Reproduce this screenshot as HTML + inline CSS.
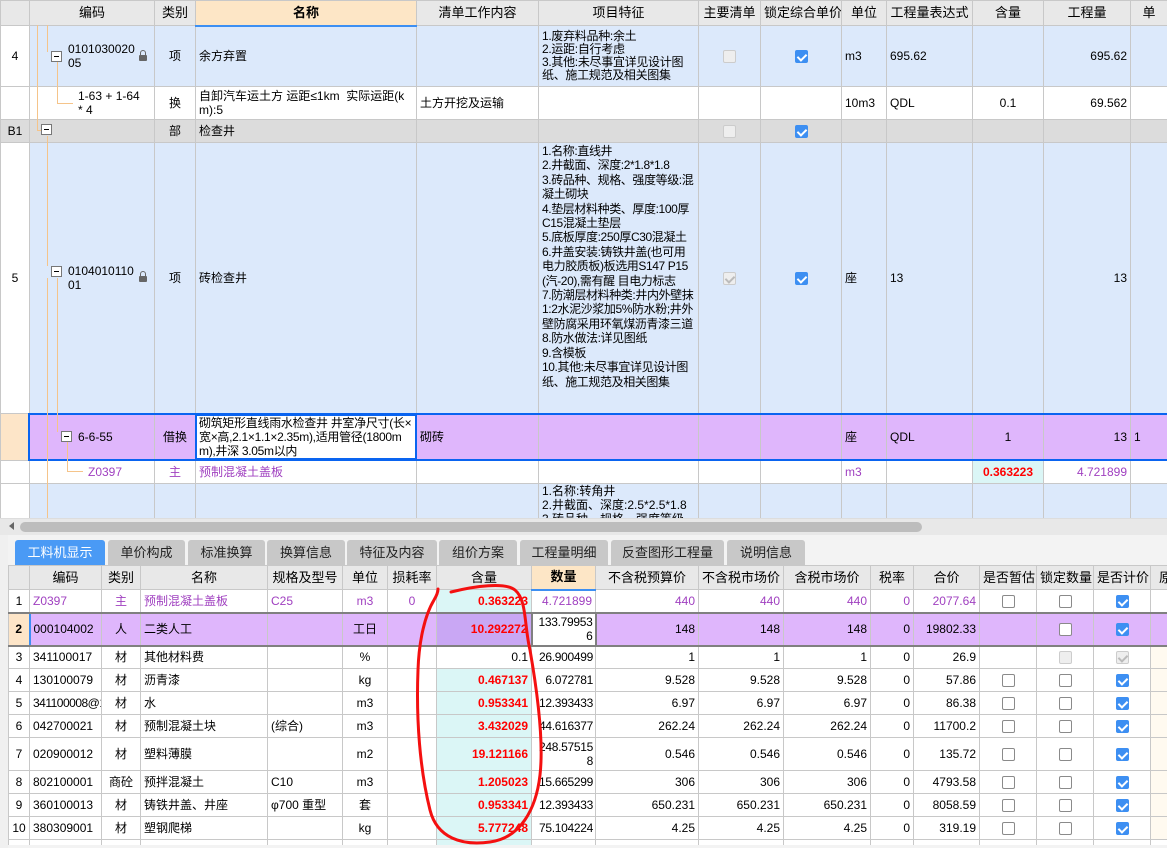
<!DOCTYPE html>
<html><head><meta charset="utf-8"><style>
*{margin:0;padding:0;box-sizing:border-box}
body{width:1167px;height:848px;overflow:hidden;background:#f0f0f0;font-family:"Liberation Sans","Noto Sans CJK SC",sans-serif;font-size:12px;color:#000;position:relative}
table{border-collapse:collapse;table-layout:fixed;position:absolute}
td{border:1px solid #c8c8c8;padding:0 3px;overflow:hidden;white-space:nowrap;line-height:14px;vertical-align:middle}
.h td{background:#e8e8e8;text-align:center;font-size:13px}
.c{text-align:center}.r{text-align:right}
.bl td{background:#dce9fb}
.gr td{background:#dcdcdc}
.pu td{background:#dfb6fc}
.w td{background:#fff}
.ppl{color:#a040c0}
.red{color:#f00;font-weight:bold}
.cy{background:#dbf6f6!important}
.wr{white-space:normal;word-break:break-all}
.nw{white-space:nowrap;letter-spacing:-0.3px;padding:0 2px}
.cb{display:inline-block;width:13px;height:13px;border:1px solid #8a8a8a;border-radius:2px;background:#fff;vertical-align:middle;position:relative}
.cb.on{background:#3d8ff2;border-color:#3d8ff2}
.cb.on:after{content:"";position:absolute;left:3px;top:1px;width:4px;height:7px;border:solid #fff;border-width:0 2px 2px 0;transform:rotate(45deg)}
.cb.dis{background:#eee;border-color:#ccc}
.cb.dis.on{background:#eee;border-color:#ccc}
.cb.dis.on:after{border-color:#bbb}
.ab{position:absolute}
.tl{position:absolute;background:#f5c48a}
.bx{position:absolute;width:11px;height:11px;border:1px solid #777;background:#fff}
.bx:after{content:"";position:absolute;left:2px;top:4px;width:5px;height:1px;background:#000}
.tab{position:absolute;top:540px;height:25px;background:#c8c8c8;border-radius:3px 3px 0 0;text-align:center;line-height:25px;font-size:13px;color:#222}
.b2{border-top:2px solid #808080!important;border-bottom:2px solid #808080!important}
</style></head><body>
<div class="ab" style="left:0;top:0;width:1167px;height:518px;overflow:hidden;background:#fff">
<table style="left:0;top:0;width:1167px">
<colgroup><col style="width:29px"><col style="width:125px"><col style="width:41px"><col style="width:221px"><col style="width:122px"><col style="width:160px"><col style="width:62px"><col style="width:81px"><col style="width:45px"><col style="width:86px"><col style="width:71px"><col style="width:87px"><col style="width:37px"></colgroup>
<tr class="h" style="height:25px"><td></td><td>编码</td><td>类别</td><td style="background:#fde6c6;border-bottom:2px solid #3d8ff2;font-weight:bold">名称</td><td>清单工作内容</td><td>项目特征</td><td>主要清单</td><td>锁定综合单价</td><td>单位</td><td>工程量表达式</td><td>含量</td><td>工程量</td><td>单</td></tr>
<tr class="bl" style="height:61px"><td class="c" style="background:#fff">4</td><td style="padding-left:38px" class="wr">0101030020<br>05</td><td class="c">项</td><td>余方弃置</td><td></td><td class="wr" style="line-height:13px;letter-spacing:-0.3px">1.废弃料品种:余土<br>2.运距:自行考虑<br>3.其他:未尽事宜详见设计图纸、施工规范及相关图集</td><td class="c"><span class="cb dis"></span></td><td class="c"><span class="cb on"></span></td><td>m3</td><td>695.62</td><td></td><td class="r">695.62</td><td></td></tr>
<tr class="w" style="height:33px"><td></td><td style="padding-left:48px;white-space:normal">1-63 + 1-64<br>* 4</td><td class="c">换</td><td class="wr">自卸汽车运土方 运距≤1km &nbsp;实际运距(km):5</td><td>土方开挖及运输</td><td></td><td></td><td></td><td>10m3</td><td>QDL</td><td class="c">0.1</td><td class="r">69.562</td><td></td></tr>
<tr class="gr" style="height:23px"><td class="c">B1</td><td></td><td class="c">部</td><td>检查井</td><td></td><td></td><td class="c"><span class="cb dis"></span></td><td class="c"><span class="cb on"></span></td><td></td><td></td><td></td><td></td><td></td></tr>
<tr class="bl" style="height:271px"><td class="c" style="background:#fff">5</td><td style="padding-left:38px" class="wr">0104010110<br>01</td><td class="c">项</td><td>砖检查井</td><td></td><td class="wr" style="line-height:14.4px;vertical-align:top;padding-top:1px;letter-spacing:-0.4px">1.名称:直线井<br>2.井截面、深度:2*1.8*1.8<br>3.砖品种、规格、强度等级:混凝土砌块<br>4.垫层材料种类、厚度:100厚C15混凝土垫层<br>5.底板厚度:250厚C30混凝土<br>6.井盖安装:铸铁井盖(也可用电力胶质板)板选用S147 P15(汽-20),需有醒 目电力标志<br>7.防潮层材料种类:井内外壁抹1:2水泥沙浆加5%防水粉;井外壁防腐采用环氧煤沥青漆三道<br>8.防水做法:详见图纸<br>9.含模板<br>10.其他:未尽事宜详见设计图纸、施工规范及相关图集</td><td class="c"><span class="cb dis on"></span></td><td class="c"><span class="cb on"></span></td><td>座</td><td>13</td><td></td><td class="r">13</td><td></td></tr>
<tr class="pu" style="height:47px"><td style="background:#fde5c8!important"></td><td style="padding-left:48px">6-6-55</td><td class="c">借换</td><td class="wr" style="background:#fff;line-height:14px;letter-spacing:-0.3px">砌筑矩形直线雨水检查井 井室净尺寸(长×宽×高,2.1×1.1×2.35m),适用管径(1800mm),井深 3.05m以内</td><td>砌砖</td><td></td><td></td><td></td><td>座</td><td>QDL</td><td class="c">1</td><td class="r">13</td><td>1</td></tr>
<tr class="w" style="height:23px"><td></td><td class="ppl" style="padding-left:58px">Z0397</td><td class="c ppl">主</td><td class="ppl">预制混凝土盖板</td><td></td><td></td><td></td><td></td><td class="ppl">m3</td><td></td><td class="c red cy">0.363223</td><td class="r ppl">4.721899</td><td></td></tr>
<tr class="bl" style="height:40px"><td style="background:#fff"></td><td></td><td></td><td></td><td></td><td class="wr" style="vertical-align:top;line-height:14px">1.名称:转角井<br>2.井截面、深度:2.5*2.5*1.8<br>3.砖品种、规格、强度等级</td><td></td><td></td><td></td><td></td><td></td><td></td><td></td></tr>
</table>
<div class="ab" style="left:28px;top:413px;width:1139px;height:48px;border:2px solid #0a64f0;border-right:none"></div>
<div class="ab" style="left:195px;top:414px;width:222px;height:46px;border:2px solid #0a64f0"></div>
<div class="tl" style="left:37px;top:25px;width:1px;height:105px"></div>
<div class="tl" style="left:37px;top:130px;width:4px;height:1px"></div>
<div class="tl" style="left:47px;top:25px;width:1px;height:27px"></div>
<div class="tl" style="left:57px;top:62px;width:1px;height:41px"></div>
<div class="tl" style="left:57px;top:103px;width:16px;height:1px"></div>
<div class="tl" style="left:47px;top:136px;width:1px;height:130px"></div>
<div class="tl" style="left:47px;top:278px;width:1px;height:240px"></div>
<div class="tl" style="left:57px;top:278px;width:1px;height:154px"></div>
<div class="tl" style="left:67px;top:442px;width:1px;height:29px"></div>
<div class="tl" style="left:67px;top:471px;width:16px;height:1px"></div>
<div class="bx" style="left:51px;top:51px"></div>
<div class="bx" style="left:41px;top:124px"></div>
<div class="bx" style="left:51px;top:266px"></div>
<div class="bx" style="left:61px;top:431px"></div>
<div class="ab" style="left:139px;top:55px;width:8px;height:6px;background:#666;border-radius:1px"></div>
<div class="ab" style="left:140px;top:50px;width:6px;height:7px;border:1.5px solid #666;border-radius:3px 3px 0 0"></div>
<div class="ab" style="left:139px;top:276px;width:8px;height:6px;background:#666;border-radius:1px"></div>
<div class="ab" style="left:140px;top:271px;width:6px;height:7px;border:1.5px solid #666;border-radius:3px 3px 0 0"></div>
</div>
<div class="ab" style="left:0;top:518px;width:1167px;height:17px;background:#e8e8e8;border-top:1px solid #ddd"></div>
<div class="ab" style="left:9px;top:522px;width:0;height:0;border:4px solid transparent;border-right:5px solid #666;border-left:none"></div>
<div class="ab" style="left:20px;top:522px;width:902px;height:10px;background:#bdbdbd;border-radius:5px"></div>
<div class="ab" style="left:8px;top:535px;width:1159px;height:313px;background:#f3f3f3"></div>
<div class="tab" style="left:15px;width:90px;background:#4a9af5;color:#fff">工料机显示</div>
<div class="tab" style="left:108px;width:77px">单价构成</div>
<div class="tab" style="left:188px;width:77px">标准换算</div>
<div class="tab" style="left:267px;width:78px">换算信息</div>
<div class="tab" style="left:347px;width:90px">特征及内容</div>
<div class="tab" style="left:439px;width:78px">组价方案</div>
<div class="tab" style="left:520px;width:88px">工程量明细</div>
<div class="tab" style="left:611px;width:113px">反查图形工程量</div>
<div class="tab" style="left:727px;width:78px">说明信息</div>
<div class="ab" style="left:8px;top:565px;width:1159px;height:280px;overflow:hidden;background:#fff">
<table style="left:0;top:0;width:1172px">
<colgroup><col style="width:21px"><col style="width:72px"><col style="width:39px"><col style="width:127px"><col style="width:75px"><col style="width:45px"><col style="width:49px"><col style="width:95px"><col style="width:64px"><col style="width:103px"><col style="width:85px"><col style="width:87px"><col style="width:43px"><col style="width:66px"><col style="width:57px"><col style="width:57px"><col style="width:57px"><col style="width:30px"></colgroup>
<tr class="h" style="height:24px"><td></td><td>编码</td><td>类别</td><td>名称</td><td>规格及型号</td><td>单位</td><td>损耗率</td><td>含量</td><td style="background:#fde6c6;font-weight:bold;border-bottom:2px solid #3d8ff2">数量</td><td>不含税预算价</td><td>不含税市场价</td><td>含税市场价</td><td>税率</td><td>合价</td><td>是否暂估</td><td>锁定数量</td><td>是否计价</td><td>原</td></tr>
<tr class="w ppl" style="height:23px"><td class="c" style="color:#000">1</td><td>Z0397</td><td class="c">主</td><td>预制混凝土盖板</td><td>C25</td><td class="c">m3</td><td class="c">0</td><td class="r red cy">0.363223</td><td class="r">4.721899</td><td class="r">440</td><td class="r">440</td><td class="r">440</td><td class="r">0</td><td class="r">2077.64</td><td class="c"><span class="cb"></span></td><td class="c"><span class="cb"></span></td><td class="c"><span class="cb on"></span></td><td></td></tr>
<tr class="pu" style="height:33px"><td class="c b2" style="background:#fde5c8!important;font-weight:bold">2</td><td class="b2" style="border-left:2px solid #3d8ff2">000104002</td><td class="c b2">人</td><td class="b2">二类人工</td><td class="b2"></td><td class="c b2">工日</td><td class="b2"></td><td class="r red b2" style="background:#c9a7f4">10.292272</td><td class="r nw" style="background:#fff;border:2px solid #808080">133.79953<br>6</td><td class="r b2">148</td><td class="r b2">148</td><td class="r b2">148</td><td class="r b2">0</td><td class="r b2">19802.33</td><td class="b2"></td><td class="c b2"><span class="cb"></span></td><td class="c b2"><span class="cb on"></span></td><td class="b2"></td></tr>
<tr class="w" style="height:23px"><td class="c">3</td><td>341100017</td><td class="c">材</td><td>其他材料费</td><td></td><td class="c">%</td><td></td><td class="r">0.1</td><td class="r nw">26.900499</td><td class="r">1</td><td class="r">1</td><td class="r">1</td><td class="r">0</td><td class="r">26.9</td><td></td><td class="c"><span class="cb dis"></span></td><td class="c"><span class="cb dis on"></span></td><td style="background:#fffaf0"></td></tr>
<tr class="w" style="height:23px"><td class="c">4</td><td>130100079</td><td class="c">材</td><td>沥青漆</td><td></td><td class="c">kg</td><td></td><td class="r red cy">0.467137</td><td class="r nw">6.072781</td><td class="r">9.528</td><td class="r">9.528</td><td class="r">9.528</td><td class="r">0</td><td class="r">57.86</td><td class="c"><span class="cb"></span></td><td class="c"><span class="cb"></span></td><td class="c"><span class="cb on"></span></td><td style="background:#fffaf0"></td></tr>
<tr class="w" style="height:23px"><td class="c">5</td><td style="letter-spacing:-0.5px">341100008@1</td><td class="c">材</td><td>水</td><td></td><td class="c">m3</td><td></td><td class="r red cy">0.953341</td><td class="r nw">12.393433</td><td class="r">6.97</td><td class="r">6.97</td><td class="r">6.97</td><td class="r">0</td><td class="r">86.38</td><td class="c"><span class="cb"></span></td><td class="c"><span class="cb"></span></td><td class="c"><span class="cb on"></span></td><td style="background:#fffaf0"></td></tr>
<tr class="w" style="height:23px"><td class="c">6</td><td>042700021</td><td class="c">材</td><td>预制混凝土块</td><td>(综合)</td><td class="c">m3</td><td></td><td class="r red cy">3.432029</td><td class="r nw">44.616377</td><td class="r">262.24</td><td class="r">262.24</td><td class="r">262.24</td><td class="r">0</td><td class="r">11700.2</td><td class="c"><span class="cb"></span></td><td class="c"><span class="cb"></span></td><td class="c"><span class="cb on"></span></td><td style="background:#fffaf0"></td></tr>
<tr class="w" style="height:33px"><td class="c">7</td><td>020900012</td><td class="c">材</td><td>塑料薄膜</td><td></td><td class="c">m2</td><td></td><td class="r red cy">19.121166</td><td class="r nw">248.57515<br>8</td><td class="r">0.546</td><td class="r">0.546</td><td class="r">0.546</td><td class="r">0</td><td class="r">135.72</td><td class="c"><span class="cb"></span></td><td class="c"><span class="cb"></span></td><td class="c"><span class="cb on"></span></td><td style="background:#fffaf0"></td></tr>
<tr class="w" style="height:23px"><td class="c">8</td><td>802100001</td><td class="c">商砼</td><td>预拌混凝土</td><td>C10</td><td class="c">m3</td><td></td><td class="r red cy">1.205023</td><td class="r nw">15.665299</td><td class="r">306</td><td class="r">306</td><td class="r">306</td><td class="r">0</td><td class="r">4793.58</td><td class="c"><span class="cb"></span></td><td class="c"><span class="cb"></span></td><td class="c"><span class="cb on"></span></td><td style="background:#fffaf0"></td></tr>
<tr class="w" style="height:23px"><td class="c">9</td><td>360100013</td><td class="c">材</td><td>铸铁井盖、井座</td><td>φ700 重型</td><td class="c">套</td><td></td><td class="r red cy">0.953341</td><td class="r nw">12.393433</td><td class="r">650.231</td><td class="r">650.231</td><td class="r">650.231</td><td class="r">0</td><td class="r">8058.59</td><td class="c"><span class="cb"></span></td><td class="c"><span class="cb"></span></td><td class="c"><span class="cb on"></span></td><td style="background:#fffaf0"></td></tr>
<tr class="w" style="height:23px"><td class="c" style="padding:0">10</td><td>380309001</td><td class="c">材</td><td>塑钢爬梯</td><td></td><td class="c">kg</td><td></td><td class="r red cy">5.777248</td><td class="r nw">75.104224</td><td class="r">4.25</td><td class="r">4.25</td><td class="r">4.25</td><td class="r">0</td><td class="r">319.19</td><td class="c"><span class="cb"></span></td><td class="c"><span class="cb"></span></td><td class="c"><span class="cb on"></span></td><td style="background:#fffaf0"></td></tr>
<tr class="w" style="height:20px"><td></td><td></td><td></td><td></td><td></td><td></td><td></td><td class="cy"></td><td></td><td></td><td></td><td></td><td></td><td></td><td></td><td></td><td></td><td></td></tr>
</table>
</div>
<svg class="ab" style="left:0;top:0" width="1167" height="848"><path d="M451 592 C475 586 505 582 515 590 C527 600 524 625 530 650 C537 690 544 740 540 775 C536 810 520 838 490 842 C462 846 437 838 430 810 C420 770 416 720 418 670 C419 640 425 615 434 600 C437 595 438 592 438 589" fill="none" stroke="#f41010" stroke-width="3" stroke-linecap="round"/></svg>
</body></html>
